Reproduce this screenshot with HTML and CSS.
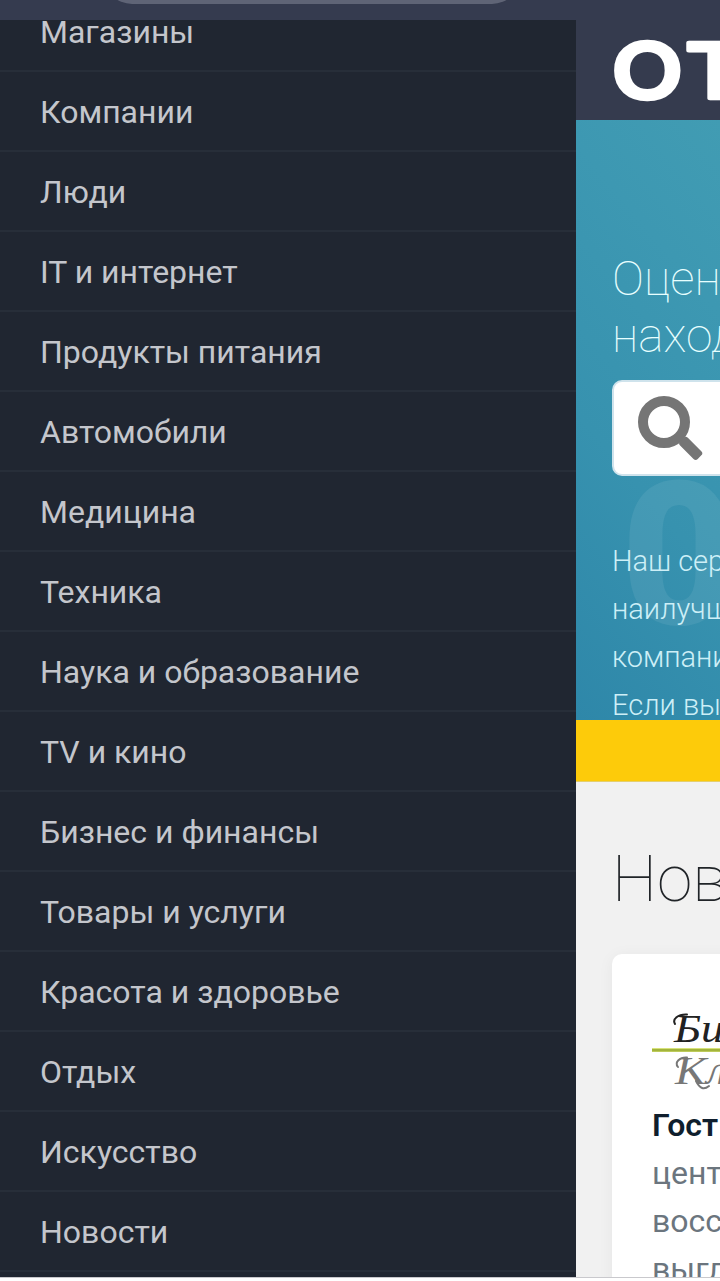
FILE: index.html
```html
<!DOCTYPE html>
<html lang="ru">
<head>
<meta charset="utf-8">
<title>Отзывы</title>
<link rel="stylesheet" href="styles.css">
</head>
<body>
<div class="screen">
  <header class="browser-bar"><div class="address"></div></header>
  <div class="viewport">
    <nav class="menu">
      <a class="item">Магазины</a>
      <a class="item">Компании</a>
      <a class="item">Люди</a>
      <a class="item">IT и интернет</a>
      <a class="item">Продукты питания</a>
      <a class="item">Автомобили</a>
      <a class="item">Медицина</a>
      <a class="item">Техника</a>
      <a class="item">Наука и образование</a>
      <a class="item">TV и кино</a>
      <a class="item">Бизнес и финансы</a>
      <a class="item">Товары и услуги</a>
      <a class="item">Красота и здоровье</a>
      <a class="item">Отдых</a>
      <a class="item">Искусство</a>
      <a class="item">Новости</a>
      <a class="item"></a>
    </nav>
    <main class="page">
      <div class="topbar">
        <svg class="logo" width="144" height="100" viewBox="0 0 144 100"><text class="logo-text" transform="translate(36 78) scale(1.22 1)" x="-0.200 59.800" y="0">ОТ</text></svg>
      </div>
      <section class="hero">
        <div class="watermark">0</div>
        <h1 class="title">Оцен<br>наход</h1>
        <div class="search">
          <svg width="100" height="92" viewBox="0 0 100 92">
            <circle cx="50" cy="40" r="21" fill="none" stroke="#757575" stroke-width="10"/>
            <rect x="-5.500" y="-12.500" width="11" height="25" rx="3" fill="#757575" transform="translate(76.700 66.300) rotate(-45)"/>
          </svg>
        </div>
        <p class="intro">Наш сер<br>наилучш<br>компани<br>Если вы</p>
      </section>
      <div class="stripe"></div>
      <section class="news">
        <h2 class="news-title">Нов</h2>
        <article class="card">
          <svg class="brand" width="68" height="100" viewBox="0 0 68 100">
            <text class="brand-text" x="22" y="42" fill="#222" textLength="50" lengthAdjust="spacingAndGlyphs">Би</text>
            <rect x="0" y="48" width="68" height="4" fill="#d7e27b"/>
            <rect x="0" y="49" width="68" height="2.500" fill="#a3b43c"/>
            <text class="brand-text" x="23" y="84" fill="#777" textLength="52" lengthAdjust="spacingAndGlyphs">Кл</text>
            <g fill="none" stroke-width="2" stroke-linecap="round">
              <path d="M23 24c-3-5 3-10 12-9.500" stroke="#222"/>
              <path d="M26 67c-4-5 2-10 9-9.500" stroke="#777"/>
              <path d="M44 81c4 8 8 9 13 5" stroke="#777"/>
            </g>
          </svg>
          <p class="text"><b>Гост</b><br>цент<br>восс<br>выгл</p>
        </article>
      </section>
    </main>
  </div>
  <footer class="bottom-bar"></footer>
</div>
</body>
</html>
```

FILE: styles.css
```css
* { box-sizing: border-box; }
body { margin: 0; font-family: Roboto, "Noto Sans", sans-serif; }
h1, h2, p { margin: 0; }
.screen { width: 720px; height: 1281px; display: flex; flex-direction: column; overflow: hidden; background: #fff; }
.browser-bar { height: 20px; flex: none; background: #353b4f; overflow: hidden; }
.address { width: 416px; height: 64px; margin: -60px 0 0 104px; border-radius: 28px; background: #5f6476; }
.viewport { flex: 1; min-height: 0; display: flex; overflow: hidden; }
.menu { width: 576px; flex: none; background: #202631; display: flex; flex-direction: column; overflow: hidden; }
.item { flex: none; height: 80px; padding-left: 40px; line-height: 80px; font-size: 32px; color: #c4c6cc; border-bottom: 2px solid #272e39; white-space: nowrap; }
.item:first-child { margin-top: -28px; }
.page { width: 144px; flex: none; display: flex; flex-direction: column; overflow: hidden; white-space: nowrap; background: #f1f1f1; }
.topbar { height: 100px; flex: none; background: #353b4e; }
.logo { display: block; }
.logo-text { font: 500 76px Inter, sans-serif; fill: #fff; stroke: #fff; stroke-width: 4.5; stroke-linejoin: round; }
.hero { position: relative; height: 600px; flex: none; padding: 130px 0 0 36px; overflow: hidden; background: linear-gradient(50deg, #2e87a9 0%, #3792af 40%, #3d98b2 75%, #419cb3 100%); }
.watermark { position: absolute; left: 45px; top: 316px; font: 900 200px/240px Roboto, sans-serif; color: rgba(255,255,255,.075); }
.title { position: relative; font-size: 48px; line-height: 57px; font-weight: 100; color: #e8ffff; }
.search { position: relative; width: 200px; height: 96px; margin-top: 16px; border: 2px solid #cfe3ec; border-radius: 10px; background: #fff; }
.search svg { display: block; }
.intro { position: relative; margin-top: 61px; font-size: 29px; line-height: 48px; font-weight: 300; color: #cdeff7; }
.stripe { height: 62px; flex: none; background: #fdcb0a; border-bottom: 1px solid #e5cf6c; }
.news { flex: 1; padding: 58px 0 0 36px; }
.news-title { font-size: 64px; line-height: 80px; font-weight: 100; color: #202428; }
.card { width: 200px; height: 360px; margin-top: 34px; padding: 46px 0 0 40px; background: #fff; border-radius: 10px; box-shadow: 0 2px 16px rgba(0,0,0,.05); }
.brand { display: block; }
.brand-text { font: italic 40px "Liberation Serif", serif; }
.text { margin-top: 1px; font-size: 32px; line-height: 48px; color: #6b757e; }
.text b { font-weight: 600; color: #0f1e2d; }
.bottom-bar { height: 4px; flex: none; background: #fff; border-top: 1px solid #c9c9cd; }
```
